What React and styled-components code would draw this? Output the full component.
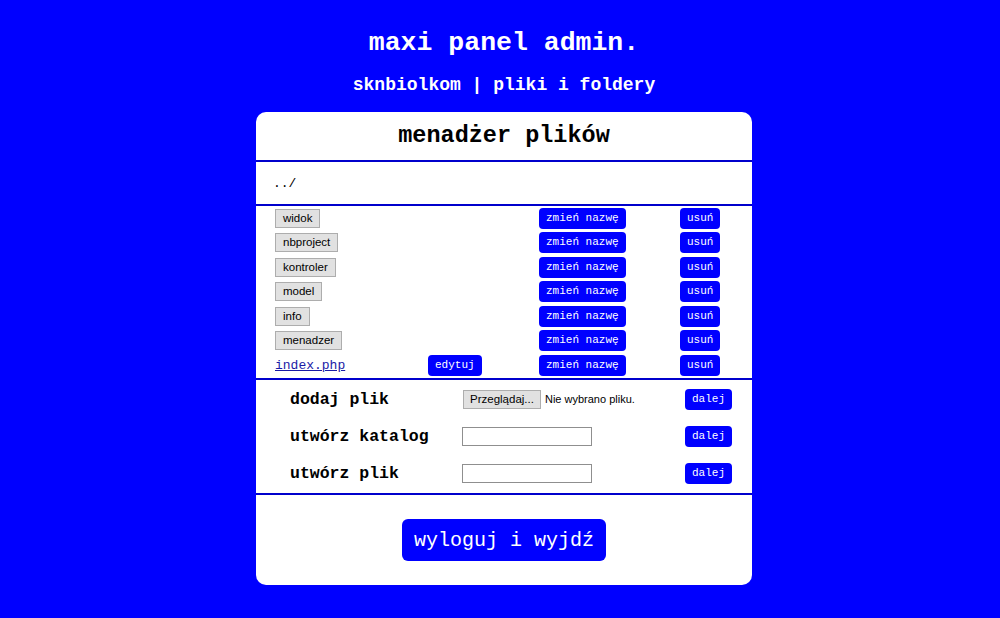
import React from "react";
import styled, { createGlobalStyle } from "styled-components";

const Global = createGlobalStyle`
  html, body { margin: 0; padding: 0; }
  body {
    background: #0000ff;
    font-family: "Liberation Mono", "Courier New", monospace;
  }
`;

const Page = styled.div`
  padding: 28px 0 0 8px;
  display: flex;
  flex-direction: column;
  align-items: center;
`;

const Title = styled.h1`
  margin: 0;
  font-size: 26.5px;
  line-height: 30px;
  font-weight: bold;
  color: #fff;
`;

const Subtitle = styled.h2`
  margin: 16px 0 16px;
  font-size: 18px;
  line-height: 22px;
  font-weight: bold;
  color: #fff;
`;

const Card = styled.div`
  width: 496px;
  background: #fff;
  border-radius: 10px;
  overflow: hidden;
  display: flex;
  flex-direction: column;
`;

const Section = styled.div`
  border-top: ${(p) => (p.$first ? "none" : "2px solid #0000cc")};
`;

const CardTitle = styled.div`
  height: 48px;
  line-height: 48px;
  text-align: center;
  font-size: 23.5px;
  font-weight: bold;
  color: #000;
`;

const ParentLink = styled.div`
  height: 42px;
  display: flex;
  align-items: center;
  padding-left: 17px;
  font-size: 13px;
  color: #000;
`;

const FileGrid = styled.div`
  display: grid;
  grid-template-columns: 153px 111px 141px auto;
  grid-auto-rows: 24.5px;
  align-items: center;
  padding: 0 0 0.5px 19px;
`;

const DirButton = styled.button`
  justify-self: start;
  height: 19px;
  padding: 0 7px;
  background: #e1e1e1;
  border: 1px solid #adadad;
  border-radius: 0;
  font-family: "Liberation Sans", Arial, sans-serif;
  font-size: 11.5px;
  color: #000;
  line-height: 17px;
`;

const FileLink = styled.a`
  justify-self: start;
  font-size: 13px;
  color: #1a1aa6;
  text-decoration: underline;
`;

const BlueButton = styled.button`
  justify-self: start;
  height: 21px;
  padding: 0 7px;
  background: #0000ff;
  color: #fff;
  border: none;
  border-radius: 4px;
  font-family: "Liberation Mono", "Courier New", monospace;
  font-size: 11px;
  line-height: 21px;
`;

const FormGrid = styled.div`
  display: grid;
  grid-template-columns: 172px 223px auto;
  grid-auto-rows: 37px;
  align-items: center;
  padding: 0.5px 0 1.5px 34px;
`;

const FormLabel = styled.div`
  font-size: 16.5px;
  font-weight: bold;
  color: #000;
`;

const FakeFile = styled.div`
  display: flex;
  align-items: center;
  gap: 4px;
  font-family: "Liberation Sans", Arial, sans-serif;
  font-size: 11px;
  color: #000;
`;

const FileButton = styled.button`
  height: 19px;
  margin-left: 1px;
  padding: 0 6px;
  background: #e1e1e1;
  border: 1px solid #adadad;
  border-radius: 0;
  font-family: "Liberation Sans", Arial, sans-serif;
  font-size: 11.5px;
  color: #000;
`;

const TextInput = styled.input`
  box-sizing: border-box;
  width: 130px;
  height: 19px;
  border: 1px solid #8f8f8f;
  padding: 0 2px;
  font-size: 12px;
`;

const Footer = styled.div`
  display: flex;
  justify-content: center;
  padding: 24px 0;
`;

const LogoutButton = styled.button`
  height: 42px;
  padding: 0 12px;
  background: #0000ff;
  color: #fff;
  border: none;
  border-radius: 6px;
  font-family: "Liberation Mono", "Courier New", monospace;
  font-size: 20px;
`;

const dirs = ["widok", "nbproject", "kontroler", "model", "info", "menadzer"];

export default function App() {
  return (
    <>
      <Global />
      <Page>
        <Title>maxi panel admin.</Title>
        <Subtitle>sknbiolkom | pliki i foldery</Subtitle>
        <Card>
          <Section $first>
            <CardTitle>menadżer plików</CardTitle>
          </Section>
          <Section>
            <ParentLink>../</ParentLink>
          </Section>
          <Section>
            <FileGrid>
              {dirs.map((d) => (
                <React.Fragment key={d}>
                  <DirButton>{d}</DirButton>
                  <span />
                  <BlueButton>zmień nazwę</BlueButton>
                  <BlueButton>usuń</BlueButton>
                </React.Fragment>
              ))}
              <FileLink href="#">index.php</FileLink>
              <BlueButton>edytuj</BlueButton>
              <BlueButton>zmień nazwę</BlueButton>
              <BlueButton>usuń</BlueButton>
            </FileGrid>
          </Section>
          <Section>
            <FormGrid>
              <FormLabel>dodaj plik</FormLabel>
              <FakeFile>
                <FileButton>Przeglądaj...</FileButton>
                <span>Nie wybrano pliku.</span>
              </FakeFile>
              <BlueButton>dalej</BlueButton>
              <FormLabel>utwórz katalog</FormLabel>
              <TextInput type="text" />
              <BlueButton>dalej</BlueButton>
              <FormLabel>utwórz plik</FormLabel>
              <TextInput type="text" />
              <BlueButton>dalej</BlueButton>
            </FormGrid>
          </Section>
          <Section>
            <Footer>
              <LogoutButton>wyloguj i wyjdź</LogoutButton>
            </Footer>
          </Section>
        </Card>
      </Page>
    </>
  );
}
